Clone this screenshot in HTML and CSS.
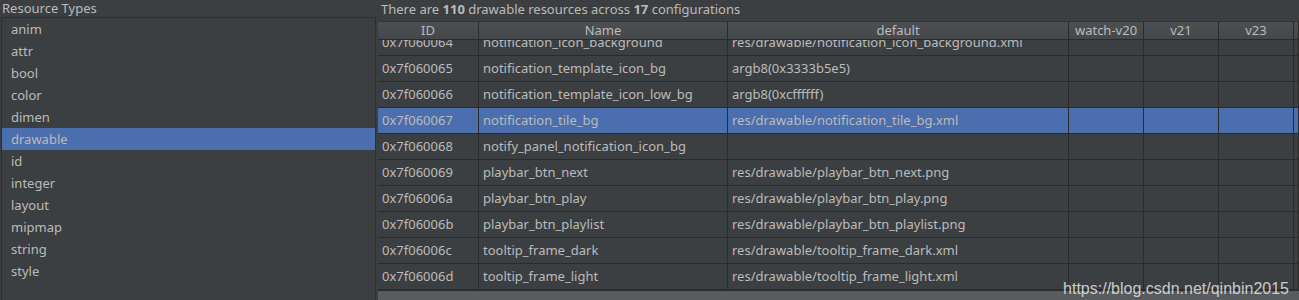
FILE: index.html
```html
<!DOCTYPE html>
<html>
<head>
  <meta charset="utf-8">
  <title>Resources</title>
  <link rel="stylesheet" href="styles.css">
</head>
<body>
  <div class="split">
    <div class="types">
      <div class="caption">Resource Types</div>
      <ul class="type-list">
        <li>anim</li>
        <li>attr</li>
        <li>bool</li>
        <li>color</li>
        <li>dimen</li>
        <li class="selected">drawable</li>
        <li>id</li>
        <li>integer</li>
        <li>layout</li>
        <li>mipmap</li>
        <li>string</li>
        <li>style</li>
      </ul>
    </div>

    <div class="resources">
      <div class="caption summary">There are <b>110</b> drawable resources across <b>17</b> configurations</div>
      <div class="grid-head">
        <div class="col c-id">ID</div>
        <div class="col c-name">Name</div>
        <div class="col c-def">default</div>
        <div class="col c-cfg">watch-v20</div>
        <div class="col c-cfg">v21</div>
        <div class="col c-cfg">v23</div>
        <div class="col c-rest"></div>
      </div>
      <div class="grid-body">
        <div class="rows">
          <div class="row"><div class="col c-id">0x7f060064</div><div class="col c-name">notification_icon_background</div><div class="col c-def">res/drawable/notification_icon_background.xml</div><div class="col c-cfg"></div><div class="col c-cfg"></div><div class="col c-cfg"></div><div class="col c-rest"></div></div>
          <div class="row"><div class="col c-id">0x7f060065</div><div class="col c-name">notification_template_icon_bg</div><div class="col c-def">argb8(0x3333b5e5)</div><div class="col c-cfg"></div><div class="col c-cfg"></div><div class="col c-cfg"></div><div class="col c-rest"></div></div>
          <div class="row"><div class="col c-id">0x7f060066</div><div class="col c-name">notification_template_icon_low_bg</div><div class="col c-def">argb8(0xcffffff)</div><div class="col c-cfg"></div><div class="col c-cfg"></div><div class="col c-cfg"></div><div class="col c-rest"></div></div>
          <div class="row selected"><div class="col c-id">0x7f060067</div><div class="col c-name">notification_tile_bg</div><div class="col c-def">res/drawable/notification_tile_bg.xml</div><div class="col c-cfg"></div><div class="col c-cfg"></div><div class="col c-cfg"></div><div class="col c-rest"></div></div>
          <div class="row"><div class="col c-id">0x7f060068</div><div class="col c-name">notify_panel_notification_icon_bg</div><div class="col c-def"></div><div class="col c-cfg"></div><div class="col c-cfg"></div><div class="col c-cfg"></div><div class="col c-rest"></div></div>
          <div class="row"><div class="col c-id">0x7f060069</div><div class="col c-name">playbar_btn_next</div><div class="col c-def">res/drawable/playbar_btn_next.png</div><div class="col c-cfg"></div><div class="col c-cfg"></div><div class="col c-cfg"></div><div class="col c-rest"></div></div>
          <div class="row"><div class="col c-id">0x7f06006a</div><div class="col c-name">playbar_btn_play</div><div class="col c-def">res/drawable/playbar_btn_play.png</div><div class="col c-cfg"></div><div class="col c-cfg"></div><div class="col c-cfg"></div><div class="col c-rest"></div></div>
          <div class="row"><div class="col c-id">0x7f06006b</div><div class="col c-name">playbar_btn_playlist</div><div class="col c-def">res/drawable/playbar_btn_playlist.png</div><div class="col c-cfg"></div><div class="col c-cfg"></div><div class="col c-cfg"></div><div class="col c-rest"></div></div>
          <div class="row"><div class="col c-id">0x7f06006c</div><div class="col c-name">tooltip_frame_dark</div><div class="col c-def">res/drawable/tooltip_frame_dark.xml</div><div class="col c-cfg"></div><div class="col c-cfg"></div><div class="col c-cfg"></div><div class="col c-rest"></div></div>
          <div class="row"><div class="col c-id">0x7f06006d</div><div class="col c-name">tooltip_frame_light</div><div class="col c-def">res/drawable/tooltip_frame_light.xml</div><div class="col c-cfg"></div><div class="col c-cfg"></div><div class="col c-cfg"></div><div class="col c-rest"></div></div>
        </div>
      </div>
      <div class="hscroll"></div>
      <div class="watermark">https://blog.csdn.net/qinbin2015</div>
    </div>
  </div>
</body>
</html>
```

FILE: styles.css
```css
html, body {
  margin: 0;
  padding: 0;
  height: 300px;
  overflow: hidden;
}
body {
  background: #3c3f41;
  color: #bbbbbb;
  font-family: "Noto Sans", "Open Sans", sans-serif;
  font-size: 13px;
}
.split {
  display: grid;
  grid-template-columns: 376px 1fr;
  column-gap: 2px;
  height: 300px;
}
.caption {
  height: 17px;
  line-height: 17px;
  padding-left: 2px;
  white-space: nowrap;
}
.type-list {
  list-style: none;
  margin: 0 0 0 1px;
  padding: 0;
  border: 1px solid #2d2f30;
  border-bottom: none;
  height: 283px;
}
.type-list li {
  height: 22px;
  line-height: 22px;
  padding-left: 9px;
}
.type-list li.selected {
  background: #4b6eaf;
}
.resources {
  position: relative;
  display: flex;
  flex-direction: column;
  overflow: hidden;
}
.summary {
  height: 21px;
  line-height: 18px;
  padding-left: 3px;
}
.summary b {
  font-weight: bold;
}
.grid-head, .row {
  display: flex;
}
.grid-head {
  height: 17px;
  line-height: 16px;
  background: linear-gradient(#4d5052, #45484a);
  border-top: 1px solid #333536;
  border-bottom: 1px solid #2b2b2b;
  text-align: center;
}
.grid-head .col {
  border-right: 1px solid #2b2b2b;
}
.col {
  flex: none;
  box-sizing: border-box;
  white-space: nowrap;
  overflow: hidden;
}
.c-id { width: 101px; }
.c-name { width: 249px; }
.c-def { width: 341px; }
.c-cfg { width: 75px; }
.c-rest { flex: 1; }
.grid-body {
  height: 250px;
  overflow: hidden;
}
.rows {
  margin-top: -10px;
}
.row {
  height: 26px;
  line-height: 25px;
  border-bottom: 1px solid #2b2b2b;
  box-sizing: border-box;
}
.row .col {
  padding-left: 4px;
  border-right: 1px solid #2b2b2b;
}
.row.selected {
  background: #4b6eaf;
}
.hscroll {
  flex: 1;
  background: #595c5e;
  border-top: 1px solid #2b2b2b;
}
.watermark {
  position: absolute;
  right: 10px;
  bottom: 3px;
  font-family: "Liberation Sans", Arial, sans-serif;
  font-size: 16px;
  color: rgba(230, 230, 230, 0.85);
}
```
